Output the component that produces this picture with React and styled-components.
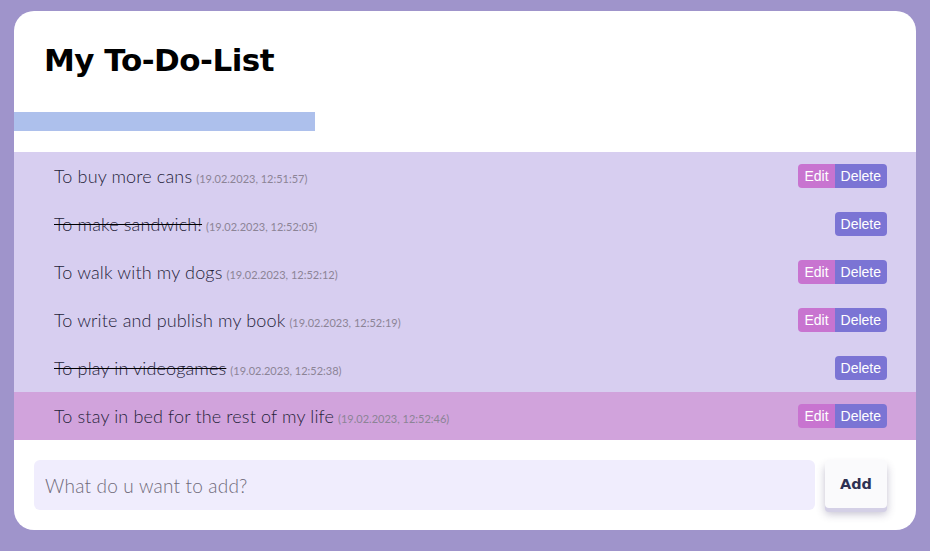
import React from "react";
import styled, { createGlobalStyle } from "styled-components";

const GlobalStyle = createGlobalStyle`
  html, body {
    margin: 0;
    padding: 0;
    background: #9f94cb;
  }
  body {
    padding: 11px 14px 22px;
    font-family: Lato, "Open Sans", sans-serif;
  }
`;

const Card = styled.div`
  background: #ffffff;
  border-radius: 20px;
  overflow: hidden;
  padding-bottom: 20px;
`;

const Title = styled.h1`
  margin: 0;
  padding: 31px 30px 0;
  font-family: "DejaVu Sans", sans-serif;
  font-weight: 900;
  font-size: 31px;
  letter-spacing: -0.5px;
  color: #000;
  height: 70px;
  box-sizing: border-box;
`;

const Bar = styled.div`
  width: 301px;
  height: 19px;
  background: #adc0ec;
  margin-top: 31px;
  margin-bottom: 21px;
`;

const List = styled.ul`
  list-style: none;
  margin: 0;
  padding: 0;
`;

const Row = styled.li`
  display: flex;
  align-items: center;
  height: 48px;
  padding: 0 29px 0 40px;
  background: ${(p) => (p.$active ? "#d1a3dc" : "#d7cef0")};
`;

const Text = styled.span`
  flex: 1;
  font-size: 18px;
  letter-spacing: 0.15px;
  color: #25233a;
  font-weight: 300;
  white-space: nowrap;
`;

const Task = styled.span`
  text-decoration: ${(p) => (p.$done ? "line-through" : "none")};
  text-decoration-color: #000;
`;

const Stamp = styled.small`
  font-size: 11px;
  letter-spacing: 0;
  font-weight: 400;
  color: #8c8496;
  margin-left: 4px;
`;

const Buttons = styled.div`
  display: flex;
`;

const Btn = styled.button`
  border: none;
  height: 24px;
  padding: 0 6px;
  font-family: "Liberation Sans", Arial, sans-serif;
  font-size: 14px;
  color: #fff;
  background: ${(p) => (p.$edit ? "#c874d0" : "#7b74d4")};
  border-radius: ${(p) => (p.$edit ? "4px 0 0 4px" : p.$alone ? "4px" : "0 4px 4px 0")};
  cursor: pointer;
`;

const Form = styled.form`
  display: flex;
  gap: 10px;
  padding: 20px 29px 0 20px;
`;

const Input = styled.input`
  flex: 1;
  height: 50px;
  border: none;
  border-radius: 6px;
  background: #f0edfd;
  padding: 0 11px;
  font-family: Lato, "Open Sans", sans-serif;
  font-size: 19px;
  font-weight: 300;
  letter-spacing: 0.2px;
  outline: none;
  &::placeholder {
    color: #6f6a79;
  }
`;

const AddBtn = styled.button`
  width: 62px;
  height: 48px;
  border: none;
  border-radius: 4px;
  background: #fafafc;
  font-family: "DejaVu Sans", sans-serif;
  font-weight: 700;
  font-size: 14.5px;
  color: #2e3153;
  box-shadow: 0 4px 0 #d4d0e6, 0 6px 8px rgba(60, 50, 100, 0.3);
`;

const todos = [
  { text: "To buy more cans", date: "19.02.2023, 12:51:57" },
  { text: "To make sandwich!", date: "19.02.2023, 12:52:05", done: true },
  { text: "To walk with my dogs", date: "19.02.2023, 12:52:12" },
  { text: "To write and publish my book", date: "19.02.2023, 12:52:19" },
  { text: "To play in videogames", date: "19.02.2023, 12:52:38", done: true },
  { text: "To stay in bed for the rest of my life", date: "19.02.2023, 12:52:46", active: true },
];

export default function App() {
  return (
    <>
      <GlobalStyle />
      <Card>
        <Title>My To-Do-List</Title>
        <Bar />
        <List>
          {todos.map((t) => (
            <Row key={t.date} $active={t.active}>
              <Text>
                <Task $done={t.done}>{t.text}</Task>
                <Stamp>({t.date})</Stamp>
              </Text>
              <Buttons>
                {!t.done && <Btn $edit>Edit</Btn>}
                <Btn $alone={t.done}>Delete</Btn>
              </Buttons>
            </Row>
          ))}
        </List>
        <Form onSubmit={(e) => e.preventDefault()}>
          <Input placeholder="What do u want to add?" />
          <AddBtn type="submit">Add</AddBtn>
        </Form>
      </Card>
    </>
  );
}
